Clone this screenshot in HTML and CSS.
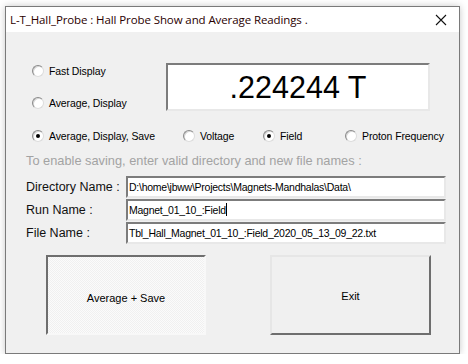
FILE: index.html
```html
<!DOCTYPE html>
<html lang="en">
<head>
  <meta charset="UTF-8">
  <title>L-T_Hall_Probe</title>
  <link rel="stylesheet" href="styles.css">
</head>
<body>
  <div class="window">
    <div class="title-bar">
      <span class="title-text">L-T_Hall_Probe : Hall Probe Show and Average Readings .</span>
      <svg class="close-icon" width="12" height="12" viewBox="0 0 12 12">
        <path d="M1 1 L11 11 M11 1 L1 11" stroke="#111" stroke-width="1.1" fill="none"/>
      </svg>
    </div>

    <div class="client">
      <div class="top">
        <div class="modes">
          <label class="radio"><span class="dot"></span>Fast Display</label>
          <label class="radio"><span class="dot"></span>Average, Display</label>
        </div>
        <div class="display">.224244 T</div>
      </div>

      <div class="options">
        <label class="radio"><span class="dot checked"></span>Average, Display, Save</label>
        <label class="radio"><span class="dot"></span>Voltage</label>
        <label class="radio"><span class="dot checked"></span>Field</label>
        <label class="radio"><span class="dot"></span>Proton Frequency</label>
      </div>

      <div class="hint">To enable saving, enter valid directory and new file names :</div>

      <div class="fields">
        <div class="field-row">
          <span class="field-label">Directory Name :</span>
          <div class="field-box">D:\home\jbww\Projects\Magnets-Mandhalas\Data\</div>
        </div>
        <div class="field-row">
          <span class="field-label">Run Name :</span>
          <div class="field-box">Magnet_01_10_:Field<span class="caret"></span></div>
        </div>
        <div class="field-row">
          <span class="field-label">File Name :</span>
          <div class="field-box">Tbl_Hall_Magnet_01_10_:Field_2020_05_13_09_22.txt</div>
        </div>
      </div>

      <div class="buttons">
        <button class="btn btn-pressed">Average + Save</button>
        <button class="btn btn-exit">Exit</button>
      </div>
    </div>
  </div>
</body>
</html>
```

FILE: styles.css
```css
* {
  box-sizing: border-box;
}

body {
  margin: 0;
  background: #ffffff;
  font-family: "Liberation Sans", Arial, sans-serif;
  color: #000;
}

.window {
  margin: 6px 0 0 5px;
  width: 455px;
  height: 348px;
  border: 1px solid #7a7a7a;
  background: #f0f0f0;
  box-shadow: 0 0 7px rgba(0, 0, 0, 0.22);
  display: flex;
  flex-direction: column;
}

.title-bar {
  height: 25px;
  background: #ffffff;
  display: flex;
  align-items: center;
  justify-content: space-between;
  padding: 0 12px 0 4px;
}

.title-text {
  font-family: "Open Sans", sans-serif;
  font-size: 11.5px;
  color: #2a0000;
  letter-spacing: -0.1px;
}

.close-icon {
  display: block;
}

.client {
  flex: 1;
  background: #f0f0f0;
}

/* radios */
.radio {
  display: flex;
  align-items: center;
  height: 16px;
  font-size: 10.5px;
  letter-spacing: -0.1px;
  white-space: nowrap;
}

.dot {
  width: 12px;
  height: 12px;
  border-radius: 50%;
  border: 1px solid;
  border-color: #8a8a8a #dcdcdc #dcdcdc #8a8a8a;
  background: #fff;
  box-shadow: inset 1px 1px 0 #d6d6d6;
  margin-right: 5px;
  flex: none;
  display: flex;
  align-items: center;
  justify-content: center;
}

.dot.checked::after {
  content: "";
  width: 4px;
  height: 4px;
  border-radius: 50%;
  background: #000;
}

.top {
  display: flex;
  margin-top: 31px;
}

.modes {
  width: 134px;
  margin-left: 26px;
  display: flex;
  flex-direction: column;
  gap: 16px;
}

.display {
  width: 264px;
  height: 48px;
  background: #fff;
  border: 2px solid;
  border-color: #7c7c7c #e8e8e8 #e8e8e8 #7c7c7c;
  display: flex;
  align-items: center;
  justify-content: center;
  font-size: 30.5px;
  padding-top: 1px;
}

.options {
  display: grid;
  grid-template-columns: 151px 80px 82px auto;
  margin: 17px 0 0 26px;
}

.hint {
  margin: 9px 0 0 20px;
  height: 16px;
  line-height: 16px;
  font-size: 12.8px;
  color: #a3a3a3;
}

.fields {
  margin: 7px 0 0 20px;
  display: flex;
  flex-direction: column;
  gap: 1px;
}

.field-row {
  display: flex;
  align-items: center;
  height: 22px;
}

.field-label {
  width: 100px;
  font-size: 12.5px;
  color: #111;
}

.field-box {
  width: 320px;
  height: 22px;
  background: #fff;
  border: 2px solid;
  border-color: #7c7c7c #e8e8e8 #e8e8e8 #7c7c7c;
  font-size: 10.5px;
  letter-spacing: -0.25px;
  line-height: 19px;
  padding-left: 1px;
  white-space: nowrap;
  overflow: hidden;
}

.caret {
  display: inline-block;
  width: 1px;
  height: 13px;
  background: #000;
  vertical-align: -2px;
}

.buttons {
  display: flex;
  margin: 11px 0 0 40px;
  gap: 64px;
}

.btn {
  width: 160px;
  height: 80px;
  font-family: "Liberation Sans", Arial, sans-serif;
  font-size: 11px;
  color: #000;
  border: 2px solid;
  padding: 1px 0 0;
}

.btn-pressed {
  border-color: #6e6e6e #f8f8f8 #f8f8f8 #6e6e6e;
  background-color: #f4f4f4;
  background-image: repeating-conic-gradient(#f0f0f0 0 25%, #fbfbfb 0 50%);
  background-size: 2px 2px;
  padding-top: 5px;
}

.btn-exit {
  width: 161px;
  border-color: #e6e6e6 #6e6e6e #6e6e6e #e6e6e6;
  background: #f0f0f0;
}
```
